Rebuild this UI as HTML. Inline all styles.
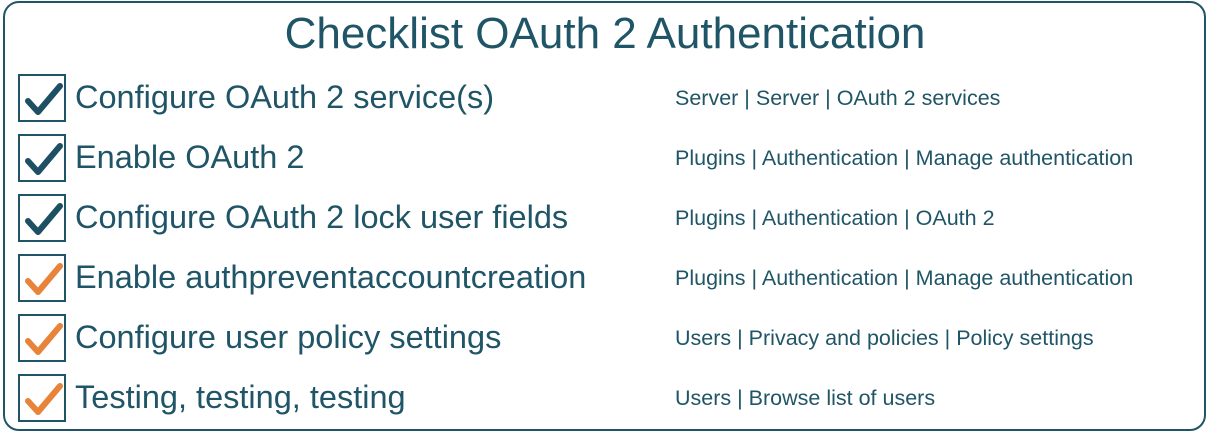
<!DOCTYPE html>
<html><head><style>
body{margin:0;width:1210px;height:432px;background:#fff;font-family:"Liberation Sans",sans-serif;color:#1f5566;position:relative;overflow:hidden}
.frame{position:absolute;left:3px;top:1px;width:1199px;height:426px;border:2px solid #1f5566;border-radius:16px}
h1{position:absolute;left:0;width:1210px;top:9px;margin:0;text-align:center;font-weight:normal;font-size:44px}
.box{position:absolute;left:18px;width:44px;height:44px;border:2px solid #1f5566}
.t{position:absolute;left:75px;font-size:32.5px;white-space:nowrap}
.r{position:absolute;left:675px;font-size:21.5px;white-space:nowrap}
svg{position:absolute;left:0;top:0}
</style></head><body>
<div class="frame"></div>
<h1>Checklist OAuth 2 Authentication</h1>

<div class="box" style="top:74px"><svg width="44" height="44"><path d="M8 25 L18 36 L40 10" fill="none" stroke="#1d5063" stroke-width="6" stroke-linecap="round" stroke-linejoin="round"/></svg></div>
<div class="t" style="top:79px">Configure OAuth 2 service(s)</div>
<div class="r" style="top:86px">Server | Server | OAuth 2 services</div>

<div class="box" style="top:134px"><svg width="44" height="44"><path d="M8 25 L18 36 L40 10" fill="none" stroke="#1d5063" stroke-width="6" stroke-linecap="round" stroke-linejoin="round"/></svg></div>
<div class="t" style="top:139px">Enable OAuth 2</div>
<div class="r" style="top:146px">Plugins | Authentication | Manage authentication</div>

<div class="box" style="top:194px"><svg width="44" height="44"><path d="M8 25 L18 36 L40 10" fill="none" stroke="#1d5063" stroke-width="6" stroke-linecap="round" stroke-linejoin="round"/></svg></div>
<div class="t" style="top:199px">Configure OAuth 2 lock user fields</div>
<div class="r" style="top:206px">Plugins | Authentication | OAuth 2</div>

<div class="box" style="top:254px"><svg width="44" height="44"><path d="M8 25 L18 36 L40 10" fill="none" stroke="#e8843a" stroke-width="6" stroke-linecap="round" stroke-linejoin="round"/></svg></div>
<div class="t" style="top:259px">Enable authpreventaccountcreation</div>
<div class="r" style="top:266px">Plugins | Authentication | Manage authentication</div>

<div class="box" style="top:314px"><svg width="44" height="44"><path d="M8 25 L18 36 L40 10" fill="none" stroke="#e8843a" stroke-width="6" stroke-linecap="round" stroke-linejoin="round"/></svg></div>
<div class="t" style="top:319px">Configure user policy settings</div>
<div class="r" style="top:326px">Users | Privacy and policies | Policy settings</div>

<div class="box" style="top:374px"><svg width="44" height="44"><path d="M8 25 L18 36 L40 10" fill="none" stroke="#e8843a" stroke-width="6" stroke-linecap="round" stroke-linejoin="round"/></svg></div>
<div class="t" style="top:379px">Testing, testing, testing</div>
<div class="r" style="top:386px">Users | Browse list of users</div>
</body></html>
